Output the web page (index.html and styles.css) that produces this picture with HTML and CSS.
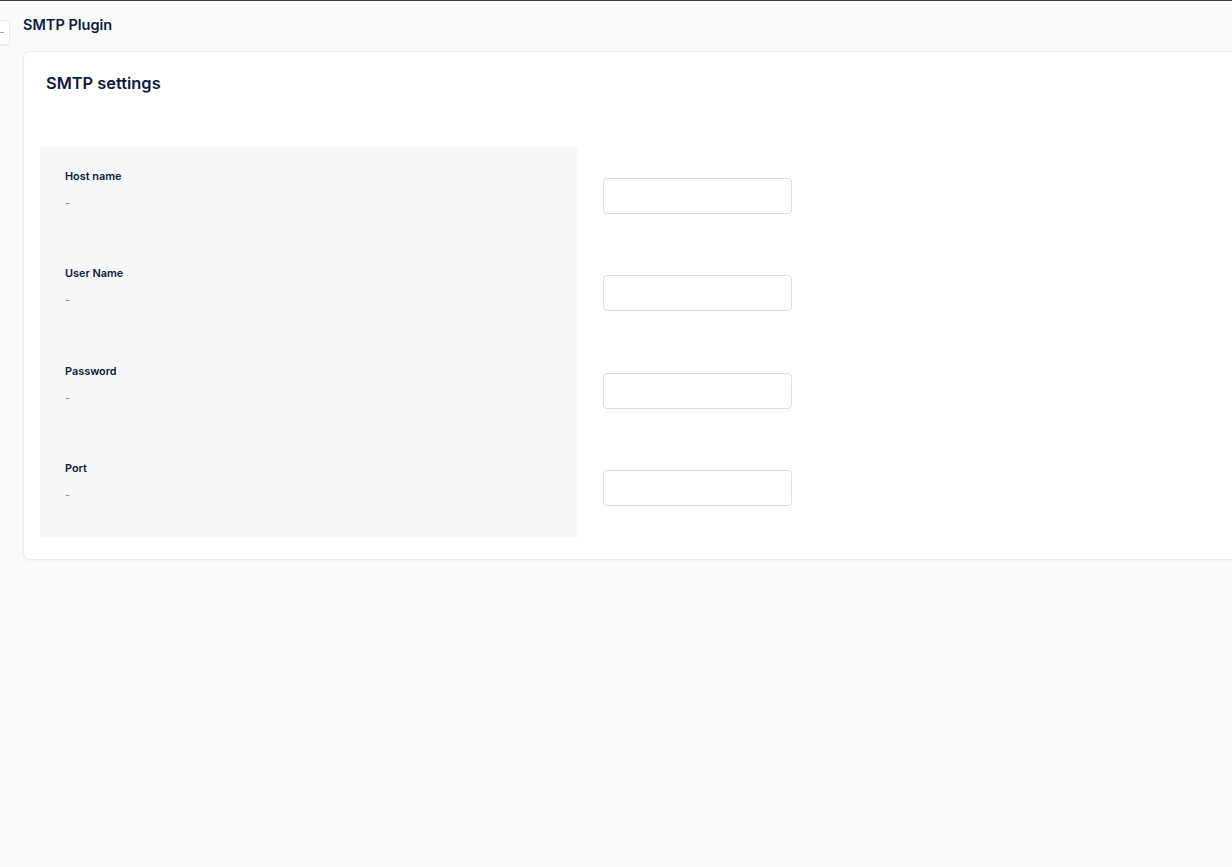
FILE: index.html
```html
<!DOCTYPE html>
<html lang="en">
<head>
<meta charset="utf-8">
<title>SMTP Plugin</title>
<link rel="stylesheet" href="styles.css">
</head>
<body>
<div class="app">
  <button class="sidebar-toggle" aria-label="Toggle sidebar"><span class="toggle-bar"></span></button>
  <main class="main">
    <h1 class="page-title">SMTP Plugin</h1>
    <section class="card">
      <h2 class="card-title">SMTP settings</h2>
      <div class="settings">
        <div class="info">
          <div class="info-label">Host name</div>
          <div class="info-value">-</div>
        </div>
        <div class="field"><input class="text-input" type="text"></div>

        <div class="info">
          <div class="info-label">User Name</div>
          <div class="info-value">-</div>
        </div>
        <div class="field"><input class="text-input" type="text"></div>

        <div class="info">
          <div class="info-label">Password</div>
          <div class="info-value">-</div>
        </div>
        <div class="field"><input class="text-input" type="password"></div>

        <div class="info">
          <div class="info-label">Port</div>
          <div class="info-value">-</div>
        </div>
        <div class="field"><input class="text-input" type="text"></div>
      </div>
    </section>
  </main>
</div>
</body>
</html>
```

FILE: styles.css
```css
* {
  box-sizing: border-box;
}

html, body {
  margin: 0;
  padding: 0;
  overflow: hidden;
}

body {
  background: #fafafa;
  font-family: Inter, "Noto Sans", Arial, sans-serif;
  color: #0e1a3d;
}

.app {
  position: relative;
  min-height: 867px;
  border-top: 1px solid #3a3a3a;
}

.sidebar-toggle {
  position: absolute;
  left: -14px;
  top: 19px;
  width: 24px;
  height: 25px;
  padding: 0;
  background: #ffffff;
  border: 1px solid #ececef;
  border-radius: 4px;
  box-shadow: 0 1px 2px rgba(0, 0, 0, 0.04);
  display: flex;
  align-items: center;
  justify-content: center;
}

.toggle-bar {
  display: block;
  width: 8px;
  height: 1px;
  margin-left: 4px;
  background: #9aa0b4;
}

.main {
  padding: 14px 0 0 23px;
}

.page-title {
  margin: 0 0 16px;
  font-size: 14.5px;
  line-height: 20px;
  font-weight: 600;
  color: #0e1a3d;
}

.card {
  width: 1240px;
  background: #ffffff;
  border: 1px solid #ececec;
  border-radius: 6px;
  box-shadow: 0 1px 3px rgba(0, 0, 0, 0.03);
  padding: 0 16px 22px;
}

.card-title {
  margin: 0;
  padding: 19px 6px 52px;
  font-size: 16.4px;
  line-height: 24px;
  font-weight: 600;
  color: #0e1a3d;
}

.settings {
  display: grid;
  grid-template-columns: 538px 189px;
  column-gap: 25px;
}

.info {
  background: #f8f8f8;
  padding: 20.5px 25px 34px;
}

.info-label {
  font-size: 10.9px;
  line-height: 16px;
  font-weight: 600;
  color: #0e1a3d;
}

.info-value {
  margin-top: 11px;
  font-size: 11px;
  line-height: 16px;
  color: #8a90a8;
}

.field {
  display: flex;
  align-items: center;
}

.text-input {
  width: 189px;
  height: 36px;
  border: 1px solid #dcdce6;
  border-radius: 4px;
  background: #ffffff;
  padding: 0 10px;
  font-family: inherit;
  font-size: 12px;
  outline: none;
}
```
